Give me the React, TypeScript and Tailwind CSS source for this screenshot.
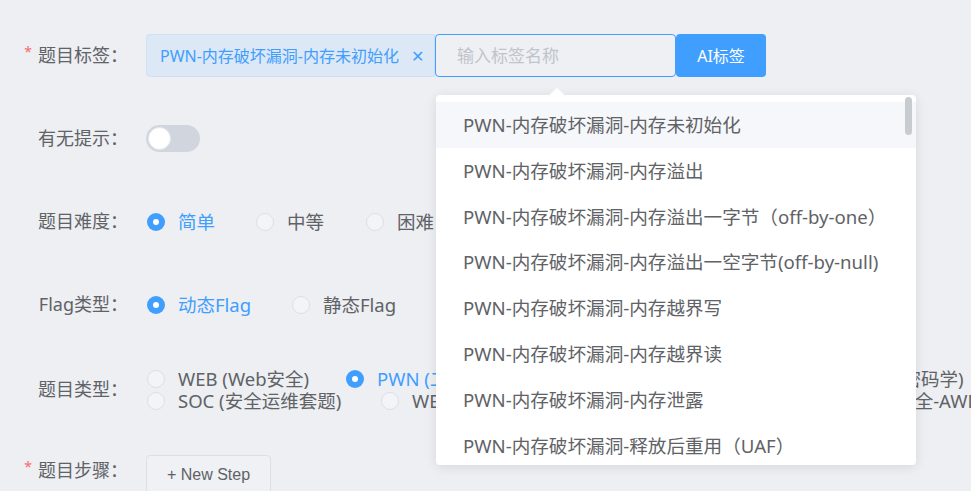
import React from "react"

const font = { fontFamily: '"Noto Sans", "Noto Sans CJK SC", sans-serif' }

const options = [
    "PWN-内存破坏漏洞-内存未初始化",
    "PWN-内存破坏漏洞-内存溢出",
    "PWN-内存破坏漏洞-内存溢出一字节（off-by-one）",
    "PWN-内存破坏漏洞-内存溢出一空字节(off-by-null)",
    "PWN-内存破坏漏洞-内存越界写",
    "PWN-内存破坏漏洞-内存越界读",
    "PWN-内存破坏漏洞-内存泄露",
    "PWN-内存破坏漏洞-释放后重用（UAF）",
]

const Label = ({ text, required }: { text: string; required?: boolean }) => (
    <div className="w-[128px] shrink-0 flex justify-end items-center text-[18px] text-[#606266]">
        {required && <span className="text-[#f56c6c] text-[14px] mr-[6px] -mt-2">*</span>}
        {text}
    </div>
)

const Radio = ({ checked, label, className }: { checked?: boolean; label: string; className?: string }) => (
    <div className={`flex items-center shrink-0 ${className ?? ""}`}>
        {checked ? (
            <span className="w-[18px] h-[18px] rounded-full bg-[#409eff] flex items-center justify-center">
                <span className="w-[6px] h-[6px] rounded-full bg-white" />
            </span>
        ) : (
            <span className="w-[18px] h-[18px] rounded-full border border-[#dcdfe6] bg-[#f3f4f7]" />
        )}
        <span className={`ml-[13px] text-[18.5px] whitespace-nowrap ${checked ? "text-[#409eff]" : "text-[#606266]"}`}>
            {label}
        </span>
    </div>
)

export default function App() {
    return (
        <div className="relative w-[971px] h-[491px] overflow-hidden bg-[#edeff3]" style={font}>
            <div className="pt-[34px] flex flex-col gap-10">
                {/* 题目标签 */}
                <div className="flex h-[43px] items-center">
                    <Label text="题目标签：" required />
                    <div className="ml-[18px] flex h-[43px]">
                        <div className="flex items-center w-[289px] pl-[13px] bg-[#dce8f5] border border-[#cfe0f3] rounded-l text-[16px] text-[#409eff]">
                            PWN-内存破坏漏洞-内存未初始化
                            <span className="ml-[12px] text-[16px]">✕</span>
                        </div>
                        <div className="w-[241px] flex items-center pl-[21px] border border-[#409eff] rounded bg-[#eef0f4] text-[17px] text-[#c0c4cc]">
                            输入标签名称
                        </div>
                        <button className="w-[90px] rounded bg-[#409eff] text-white text-[16px]">AI标签</button>
                    </div>
                </div>

                {/* 有无提示 */}
                <div className="flex h-[43px] items-center">
                    <Label text="有无提示：" />
                    <div className="ml-[18px] w-[54px] h-[27px] rounded-full bg-[#d1d6de] flex items-center px-[2px]">
                        <span className="w-[23px] h-[23px] rounded-full bg-white border border-[#e4e7ed]" />
                    </div>
                </div>

                {/* 题目难度 */}
                <div className="flex h-[43px] items-center">
                    <Label text="题目难度：" />
                    <div className="ml-[18px] flex">
                        <Radio checked label="简单" className="w-[110px] pl-[1px]" />
                        <Radio label="中等" className="w-[110px]" />
                        <Radio label="困难" className="w-[110px]" />
                    </div>
                </div>

                {/* Flag类型 */}
                <div className="flex h-[43px] items-center">
                    <Label text="Flag类型：" />
                    <div className="ml-[18px] flex">
                        <Radio checked label="动态Flag" className="w-[146px] pl-[1px]" />
                        <Radio label="静态Flag" />
                    </div>
                </div>

                {/* 题目类型 */}
                <div className="flex h-[43px] items-center mt-[2px]">
                    <Label text="题目类型：" />
                    <div className="ml-[18px] flex flex-col leading-[22px]">
                        <div className="flex h-[22px]">
                            <Radio label="WEB (Web安全)" className="w-[200px] pl-[1px]" />
                            <Radio checked label="PWN (二进制安全)" className="w-[446px]" />
                            <Radio label="CRYPTO (密码学)" />
                        </div>
                        <div className="flex h-[22px]">
                            <Radio label="SOC (安全运维套题)" className="w-[235px] pl-[1px]" />
                            <Radio label="WEB-AWD (Web攻防)" className="w-[395px]" />
                            <Radio label="AWD (网络安全-AWD)" />
                        </div>
                    </div>
                </div>

                {/* 题目步骤 */}
                <div className="flex h-[43px] items-center mt-[-2px]">
                    <Label text="题目步骤：" required />
                    <button
                        className="ml-[18px] mt-[6px] w-[125px] h-[40px] self-start border border-[#dcdfe6] rounded bg-[#eff1f4] text-[16px] text-[#606266]"
                        style={{ fontFamily: '"Liberation Sans", Arial, sans-serif' }}
                    >
                        + New Step
                    </button>
                </div>
            </div>

            {/* dropdown */}
            <div className="absolute left-[436px] top-[95px] w-[480px] h-[370px] bg-white rounded shadow-[0_2px_12px_rgba(0,0,0,0.1)]">
                <div className="absolute -top-[6px] left-[115px] w-3 h-3 bg-white rotate-45 border-l border-t border-[#ebeef5]" />
                <div className="relative h-full overflow-hidden rounded pt-[7px]">
                    {options.map((o, i) => (
                        <div
                            key={o}
                            className={`h-[45.8px] flex items-center pl-[27px] text-[18.6px] text-[#606266] whitespace-nowrap ${i === 0 ? "bg-[#f5f7fa]" : ""}`}
                        >
                            {o}
                        </div>
                    ))}
                    <div className="absolute right-[4px] top-[2px] w-[7px] h-[38px] rounded-full bg-[#c8cbd0]" />
                </div>
            </div>
        </div>
    )
}
